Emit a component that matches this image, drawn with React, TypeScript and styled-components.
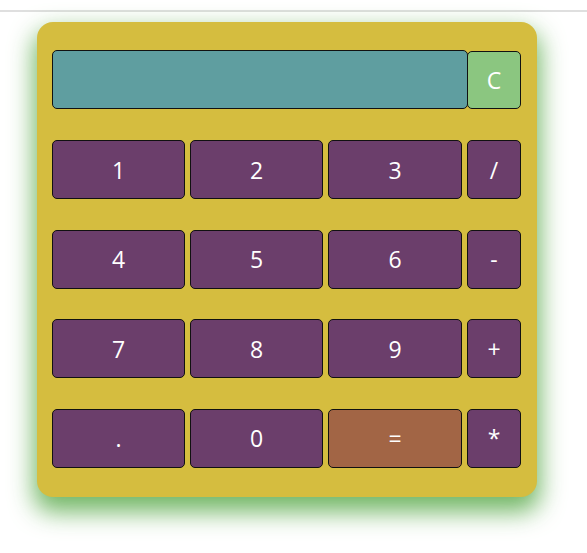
import React from "react";
import styled, { createGlobalStyle } from "styled-components";

const Global = createGlobalStyle`
  html, body { margin: 0; padding: 0; background: #ffffff; }
  body { font-family: "Open Sans", "DejaVu Sans", sans-serif; }
`;

const TopRule = styled.div`
  height: 10px;
  border-bottom: 2px solid #dfdfdf;
`;

const Page = styled.div`
  padding: 10px 0 56px 37px;
`;

const Calculator = styled.div`
  width: 500px;
  height: 475px;
  box-sizing: border-box;
  background: #d5bd3f;
  border-radius: 16px;
  padding: 28px 16px 0 15px;
  box-shadow: 0 12px 24px 3px rgba(100, 175, 85, 0.9);
  display: flex;
  flex-direction: column;
  gap: 31px;
`;

const DisplayRow = styled.div`
  display: flex;
  align-items: flex-start;
`;

const Screen = styled.div`
  width: 417px;
  height: 59px;
  box-sizing: border-box;
  background: #5f9ea0;
  border: 1px solid #111;
  border-radius: 5px;
`;

const Key = styled.button<{ $tone?: "num" | "eq" | "clear" }>`
  box-sizing: border-box;
  height: 59px;
  border: 1px solid #111;
  border-radius: 5px;
  padding: 0;
  color: #ffffff;
  font-family: "Open Sans", "DejaVu Sans", sans-serif;
  font-size: 23px;
  background: ${(p) =>
    p.$tone === "eq" ? "#a26545" : p.$tone === "clear" ? "#8bc680" : "#6b3e6b"};
  display: flex;
  align-items: center;
  justify-content: center;
`;

const ClearKey = styled(Key)`
  width: 54px;
  height: 58px;
  margin: 1px 0 0 -1px;
`;

const Pad = styled.div`
  display: grid;
  grid-template-columns: 133px 133px 134px 54px;
  column-gap: 5px;
  row-gap: 30.5px;
  grid-auto-rows: 59px;
`;

const keys: { label: string; tone?: "num" | "eq" }[] = [
  { label: "1" }, { label: "2" }, { label: "3" }, { label: "/" },
  { label: "4" }, { label: "5" }, { label: "6" }, { label: "-" },
  { label: "7" }, { label: "8" }, { label: "9" }, { label: "+" },
  { label: "." }, { label: "0" }, { label: "=", tone: "eq" }, { label: "*" },
];

export default function App() {
  return (
    <>
      <Global />
      <TopRule />
      <Page>
        <Calculator>
          <DisplayRow>
            <Screen />
            <ClearKey $tone="clear">C</ClearKey>
          </DisplayRow>
          <Pad>
            {keys.map((k) => (
              <Key key={k.label} $tone={k.tone}>
                {k.label}
              </Key>
            ))}
          </Pad>
        </Calculator>
      </Page>
    </>
  );
}
